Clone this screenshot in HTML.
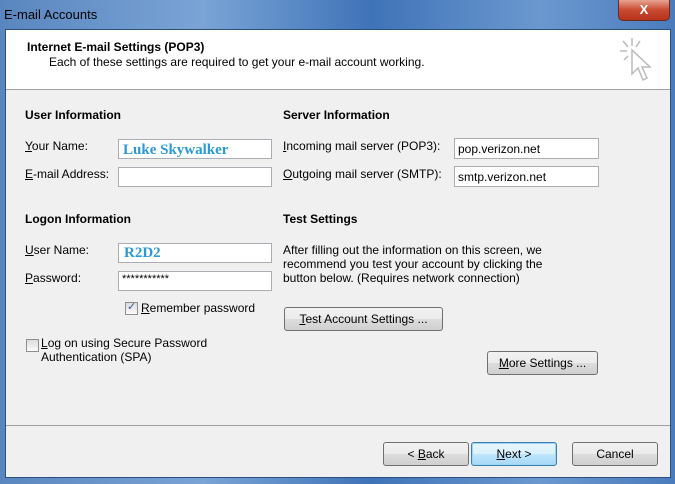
<!DOCTYPE html>
<html><head><style>
body{margin:0;width:675px;height:484px;overflow:hidden;background:#3a6db0;font-family:"Liberation Sans","DejaVu Sans",sans-serif;font-size:12px;color:#000;position:relative}
.a{position:absolute;white-space:nowrap}
.frame{position:absolute;left:0;top:0;width:675px;height:484px;background:linear-gradient(90deg,#5a86bf 0%,#7aa4d6 30%,#3f73b8 55%,#6b98cf 80%,#4a7bbc 100%)}
.client{position:absolute;left:5px;top:29px;width:664px;height:447px;background:#f0f0f0;border:1px solid #2b4f80}
.hdr{position:absolute;left:0;top:0;width:664px;height:59px;background:#fff;border-bottom:1px solid #a0a0a0}
.in{position:absolute;background:#fff;border:1px solid #abadb3;height:19px;box-sizing:border-box}
.btn{position:absolute;height:24px;box-sizing:border-box;border:1px solid #707070;border-radius:3px;background:linear-gradient(#f2f2f2 0%,#ebebeb 50%,#dddddd 51%,#cfcfcf 100%);text-align:center;line-height:22px}
b{font-weight:bold}
u{text-decoration:underline}
.blue{font-family:"Liberation Serif",serif;font-weight:bold;color:#2a9ad6;font-size:15px}
.cb{position:absolute;width:11px;height:11px;border:1px solid #8f8f8f;background:linear-gradient(#dcdcdc,#fbfbfb)}
</style></head><body>
<div class="frame"></div>
<div class="a" style="left:4px;top:7px;font-size:13px;color:#000">E-mail Accounts</div>
<div class="a" style="left:618px;top:0;width:50px;height:20px;border:1px solid #6b2a20;border-top:none;border-radius:0 0 5px 5px;background:linear-gradient(#e8a392,#c84a30 50%,#b8321c);color:#fff;font-weight:bold;text-align:center;line-height:19px;font-size:13px">X</div>
<div class="client">
 <div class="hdr">
  <div class="a" style="left:21px;top:10px"><b>Internet E-mail Settings (POP3)</b></div>
  <div class="a" style="left:43px;top:25px">Each of these settings are required to get your e-mail account working.</div>
  <svg class="a" style="left:612px;top:6px" width="40" height="50" viewBox="0 0 40 50"><g stroke="#bbb" stroke-width="1.5" fill="none"><line x1="14" y1="2" x2="14" y2="10"/><line x1="5" y1="5" x2="10" y2="11"/><line x1="22" y1="5" x2="18" y2="11"/><line x1="2" y1="15" x2="9" y2="15"/><line x1="6" y1="24" x2="10" y2="20"/><path d="M14 14 L14 38 L20 32 L25 44 L29 42 L24 31 L32 31 Z" fill="#fff"/></g></svg>
 </div>
 <div class="a" style="left:19px;top:78px"><b>User Information</b></div>
 <div class="a" style="left:19px;top:109px"><u>Y</u>our Name:</div>
 <div class="in" style="left:112px;top:109px;width:154px;height:20px"><span class="a blue" style="left:4px;top:2px">Luke Skywalker</span></div>
 <div class="a" style="left:19px;top:137px"><u>E</u>-mail Address:</div>
 <div class="in" style="left:112px;top:137px;width:154px;height:20px"></div>
 <div class="a" style="left:19px;top:182px"><b>Logon Information</b></div>
 <div class="a" style="left:19px;top:213px"><u>U</u>ser Name:</div>
 <div class="in" style="left:112px;top:213px;width:154px;height:20px"><span class="a blue" style="left:5px;top:1px">R2D2</span></div>
 <div class="a" style="left:19px;top:241px"><u>P</u>assword:</div>
 <div class="in" style="left:112px;top:241px;width:154px;height:20px"><span class="a" style="left:3px;top:1px;font-size:11px">***********</span></div>
 <div class="cb" style="left:119px;top:272px"><span class="a" style="left:1px;top:-3px;color:#3a5a8a;font-size:11px">✓</span></div>
 <div class="a" style="left:135px;top:271px"><u>R</u>emember password</div>
 <div class="cb" style="left:20px;top:309px"></div>
 <div class="a" style="left:35px;top:306px"><u>L</u>og on using Secure Password</div>
 <div class="a" style="left:35px;top:320px">Authentication (SPA)</div>

 <div class="a" style="left:277px;top:78px"><b>Server Information</b></div>
 <div class="a" style="left:277px;top:109px"><u>I</u>ncoming mail server (POP3):</div>
 <div class="in" style="left:448px;top:108px;width:145px;height:21px"><span class="a" style="left:3px;top:3px">pop.verizon.net</span></div>
 <div class="a" style="left:277px;top:137px"><u>O</u>utgoing mail server (SMTP):</div>
 <div class="in" style="left:448px;top:136px;width:145px;height:21px"><span class="a" style="left:3px;top:3px">smtp.verizon.net</span></div>
 <div class="a" style="left:277px;top:182px"><b>Test Settings</b></div>
 <div class="a" style="left:277px;top:213px">After filling out the information on this screen, we</div>
 <div class="a" style="left:277px;top:227px">recommend you test your account by clicking the</div>
 <div class="a" style="left:277px;top:241px">button below. (Requires network connection)</div>
 <div class="btn" style="left:278px;top:277px;width:159px"><u>T</u>est Account Settings ...</div>
 <div class="btn" style="left:481px;top:321px;width:111px"><u>M</u>ore Settings ...</div>

 <div class="a" style="left:0;top:395px;width:664px;height:1px;background:#a0a0a0"></div>
 <div class="btn" style="left:377px;top:412px;width:86px">&lt; <u>B</u>ack</div>
 <div class="btn" style="left:465px;top:412px;width:86px;border-color:#3c7fb1;background:linear-gradient(#eaf6fd,#d9f0fc 50%,#bee6fd 51%,#a7d9f5);box-shadow:inset 0 0 0 1px #9cd6f4"><u>N</u>ext &gt;</div>
 <div class="btn" style="left:566px;top:412px;width:86px">Cancel</div>
</div>
</body></html>
